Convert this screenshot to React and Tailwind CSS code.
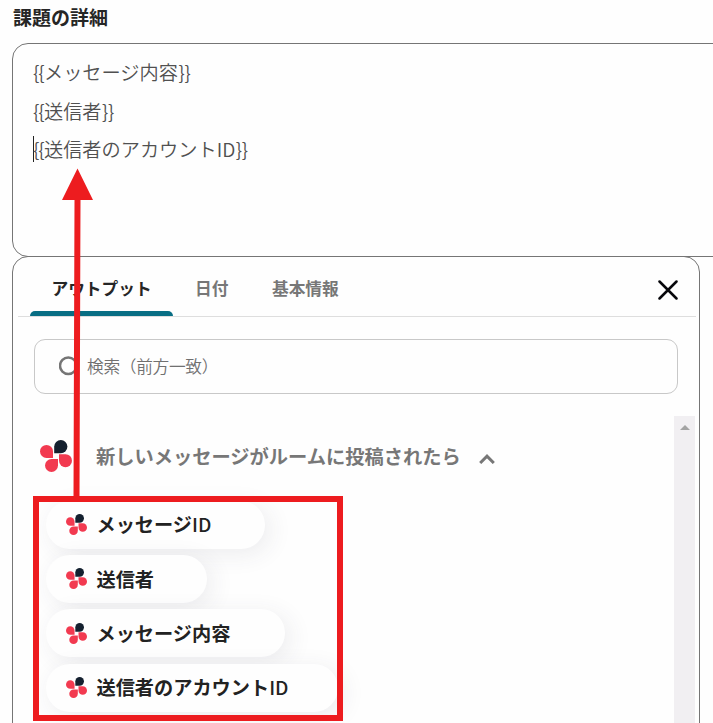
import React from "react";

const detailLines = [
  { id: 1, text: "メッセージ内容" },
  { id: 2, text: "送信者" },
  { id: 3, text: "送信者のアカウント", latin: "ID", caret: true },
];

const outputs = [
  { text: "メッセージ", latin: "ID", width: "w-[219px]" },
  { text: "送信者", width: "w-[161px]" },
  { text: "メッセージ内容", width: "w-[239px]" },
  { text: "送信者のアカウント", latin: "ID", width: "w-[292px]" },
];

const FlowerLogo = ({ className }) => (
  <svg viewBox="0 0 32 32" className={className}>
    <path
      d="M14.2 13.2V6.6a6.6 6.6 0 1 1 6.6 6.6z"
      fill="#14202f"
    />
    <path d="M13 17.9H6.5A6.5 6.5 0 1 1 13 11.4z" fill="#f23a50" />
    <path d="M19 14.2h6.5a6.5 6.5 0 1 1-6.5 6.5z" fill="#f23a50" />
    <path d="M18 19v6.5a6.5 6.5 0 1 1-6.5-6.5z" fill="#f23a50" />
  </svg>
);

const App = () => {
  return (
    <div className="relative h-[723px] w-[713px] overflow-hidden bg-[#fefefe] font-['Noto_Sans_CJK_JP',sans-serif] whitespace-nowrap">
      <h1 className="h-[43px] pt-[4px] pl-[13px] text-[19px] leading-[26px] font-bold text-[#262626]">
        課題の詳細
      </h1>

      {/* Detail editor */}
      <div className="ml-3 h-[214px] w-[760px] rounded-2xl border border-[#757575] pt-[9px] pl-5 text-[19.2px] leading-[38.5px] font-[350] text-[#505050]">
        {detailLines.map((line) => (
          <div key={line.id} className="flex items-center">
            {line.caret && <span className="-mr-px h-[26px] w-px bg-[#222]" />}
            <span className="w-[11px] tracking-[-1px]">{"{{"}</span>
            <span>{line.text}</span>
            {line.latin && <span>{line.latin}</span>}
            <span className="ml-[0.5px] tracking-[-0.4px]">{"}}"}</span>
          </div>
        ))}
      </div>

      {/* Output picker */}
      <div className="-mt-px ml-3 h-[480px] w-[688px] rounded-t-2xl border border-[#757575] pr-[3px] pl-[5px]">
        <div className="flex h-[60px] border-b border-[#dedede] text-[16.7px] leading-[62px] font-bold text-[#777]">
          <div className="relative ml-3 w-[143px] pl-[21.5px] text-[#262626]">
            アウトプット
            <div className="absolute bottom-0 left-0 h-[5px] w-[143px] rounded-t-[5px] bg-[#086e84]" />
          </div>
          <div className="w-[77px] pl-[22px]">日付</div>
          <div className="pl-[22px]">基本情報</div>
          <svg
            viewBox="0 0 20 20"
            className="mt-[23px] mr-[18.5px] ml-auto h-5 w-5"
            fill="none"
            stroke="#08080c"
            strokeWidth="2.5"
            strokeLinecap="round"
          >
            <path d="M1.5 1.5l17 17M18.5 1.5l-17 17" />
          </svg>
        </div>

        <div className="mt-[22px] ml-4 flex h-[55px] w-[644px] items-center rounded-[11px] border border-[#c8c8c8] pl-6 text-[16.7px] font-[350] text-[#707070]">
          <svg
            viewBox="0 0 24 24"
            className="h-6 w-6"
            fill="none"
            stroke="#757575"
            strokeWidth="2.5"
          >
            <circle cx="9.3" cy="10.7" r="8.3" />
            <path d="M15 16.2l3 3" />
          </svg>
          <span className="mt-px ml-1 tracking-[-0.3px]">検索（前方一致）</span>
        </div>

        <div className="mt-[22px] flex h-[320px] justify-between">
          <div className="pt-[22px] pl-[22px]">
            <div className="flex h-[36px] items-center text-[19.25px] font-bold text-[#777]">
              <FlowerLogo className="h-8 w-8" />
              <span className="ml-6">新しいメッセージがルームに投稿されたら</span>
              <svg
                viewBox="0 0 16 10"
                className="mt-[5px] ml-[18px] h-[10px] w-4"
                fill="none"
                stroke="#777"
                strokeWidth="3"
              >
                <path d="M1.2 9L8 2.2 14.8 9" />
              </svg>
            </div>
            <div className="mt-[26.6px] ml-[6px] flex flex-col gap-[6.4px]">
              {outputs.map((item) => (
                <div
                  key={item.text + item.width}
                  className={`flex h-12 items-center rounded-full bg-[#fefefe] pl-[19.5px] text-[19.2px] font-bold text-[#222] shadow-[5px_5px_24px_rgba(60,50,80,0.09)] ${item.width}`}
                >
                  <FlowerLogo className="h-[21px] w-[21px]" />
                  <span className="ml-[10px]">{item.text}</span>
                  {item.latin && (
                    <span className="font-medium">{item.latin}</span>
                  )}
                </div>
              ))}
            </div>
          </div>
          <div className="mr-px flex w-[21px] justify-center bg-[#f1eff2] pt-[9px]">
            <svg viewBox="0 0 10 5" className="h-[5px] w-[10px]" fill="#a3a3a3">
              <path d="M5 0l5 5H0z" />
            </svg>
          </div>
        </div>
      </div>

      {/* Callout: frame and arrow over the panels */}
      <div className="absolute top-[496px] left-[33px] h-[225px] w-[310px] border-[6px] border-[#ed1c1f]" />
      <svg
        viewBox="0 0 32 330"
        className="absolute top-[168px] left-[62px] h-[330px] w-8"
        fill="#ed1c1f"
      >
        <path d="M15.5 0.5L31 32H18.5L17.5 330h-6L12.5 32H0z" />
      </svg>
    </div>
  );
};

export default App;
